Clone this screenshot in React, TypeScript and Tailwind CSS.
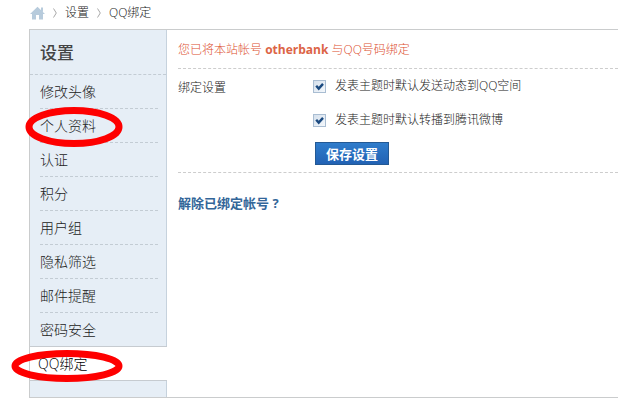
import React from 'react';

const menuItems = [
  { label: '修改头像' },
  { label: '个人资料', circled: true },
  { label: '认证' },
  { label: '积分' },
  { label: '用户组' },
  { label: '隐私筛选' },
  { label: '邮件提醒' },
  { label: '密码安全' },
];

const options = [
  { id: 'feed', label: '发表主题时默认发送动态到QQ空间' },
  { id: 'weibo', label: '发表主题时默认转播到腾讯微博' },
];

const Chevron: React.FC = () => (
  <svg className="h-3 w-1" viewBox="0 0 4 12" fill="none" stroke="#a8a8a8" aria-hidden="true">
    <path d="M0.5 1.5L3.3 6L0.5 10.5" />
  </svg>
);

const Breadcrumb: React.FC = () => (
  <nav className="flex h-[29px] items-center pb-1 pl-[30px]">
    <a href="#home" aria-label="首页">
      <svg className="h-3.5 w-[15px]" viewBox="0 0 15 14" aria-hidden="true">
        <path d="M7.5 0.8L15 8h-2v5.5H9V9H6v4.5H2V8H0z" fill="#b7cbdc" />
        <path d="M11 1.5h2v5L11 4.5z" fill="#b7cbdc" />
      </svg>
    </a>
    <span className="mx-2"><Chevron /></span>
    <a href="#settings">设置</a>
    <span className="mx-2"><Chevron /></span>
    <a href="#qq">QQ绑定</a>
  </nav>
);

const Sidebar: React.FC = () => (
  <aside className="w-[137px] shrink-0 border-r border-[#c6d2dd] bg-[#e6eef6] pb-4">
    <h2 className="h-[45px] border-b border-dashed border-[#c3ccd4] pl-2.5 text-[17px] leading-[46px] font-medium text-[#444]">
      设置
    </h2>
    <ul className="text-sm leading-[33px]">
      {menuItems.map((item) => (
        <li key={item.label} className="relative mr-2 ml-2.5 h-[34px] border-b border-dashed border-[#c3ccd4] last:border-transparent">
          <a href="#menu" className="block">{item.label}</a>
          {item.circled && (
            <svg className="pointer-events-none absolute -top-0.5 -left-[15px] z-10 h-10 w-[98px]" viewBox="0 0 98 40" fill="none" aria-hidden="true">
              <ellipse cx="49" cy="20" rx="45" ry="16.5" stroke="#fe0000" strokeWidth="7" />
            </svg>
          )}
        </li>
      ))}
    </ul>
    {/* Active tab opens into the content panel */}
    <div className="relative -mt-px -mr-px h-[35px] border-y border-[#c6cbd0] bg-white">
      <a href="#qq" className="block pl-2 text-sm leading-[34px] text-black">QQ绑定</a>
      <svg className="pointer-events-none absolute top-[3px] -left-[19px] z-10 h-8 w-28" viewBox="0 0 112 32" fill="none" aria-hidden="true">
        <ellipse cx="56" cy="16" rx="52" ry="12.5" stroke="#fe0000" strokeWidth="7" />
      </svg>
    </div>
  </aside>
);

const Option: React.FC<{ id: string; label: string }> = ({ id, label }) => (
  <div className="flex h-[34px] items-center">
    <span className="grid size-[13px]">
      <input
        id={id}
        type="checkbox"
        defaultChecked
        className="peer col-start-1 row-start-1 size-[13px] appearance-none border border-[#a9bdd2] bg-linear-to-br from-[#d5e0ec] to-[#f4f8fc]"
      />
      <svg className="pointer-events-none invisible col-start-1 row-start-1 size-[13px] peer-checked:visible" viewBox="0 0 13 13" fill="none" aria-hidden="true">
        <path d="M3.2 5.8L5.7 8.6L10 3.9" stroke="#1b4a80" strokeWidth="2.4" />
      </svg>
    </span>
    <label htmlFor={id} className="pl-[9px]">{label}</label>
  </div>
);

const App: React.FC = () => (
  <div className="overflow-x-hidden bg-white font-['Open_Sans','Noto_Sans_CJK_SC',sans-serif] text-xs font-light text-[#222]">
    <Breadcrumb />
    <div className="ml-[29px] flex border-y border-l border-[#cacccd]">
      <Sidebar />
      <main className="min-w-0 flex-1 pl-[11px]">
        <p className="h-[39px] border-b border-dashed border-[#cdcdcd] leading-10 text-[#dd4f30]">
          您已将本站帐号 <strong className="font-bold text-[#dc6446]">otherbank</strong> 与QQ号码绑定
        </p>
        <form className="flex border-b border-dashed border-[#cdcdcd] pb-[7px]">
          <div className="w-[135px] shrink-0 leading-[38px]">绑定设置</div>
          <div>
            {options.map((option) => (
              <Option key={option.id} {...option} />
            ))}
            <button
              type="button"
              className="mt-[5px] ml-0.5 block h-[23px] w-[74px] border border-[#235994] bg-linear-to-b from-[#2f7ccb] to-[#2262b4] text-[13px] leading-5 font-bold text-white"
            >
              保存设置
            </button>
          </div>
        </form>
        <h2 className="pt-5 text-[13px] leading-5 font-bold text-[#336699]">
          <a href="#unbind">解除已绑定帐号 ?</a>
        </h2>
      </main>
    </div>
  </div>
);

export default App;
